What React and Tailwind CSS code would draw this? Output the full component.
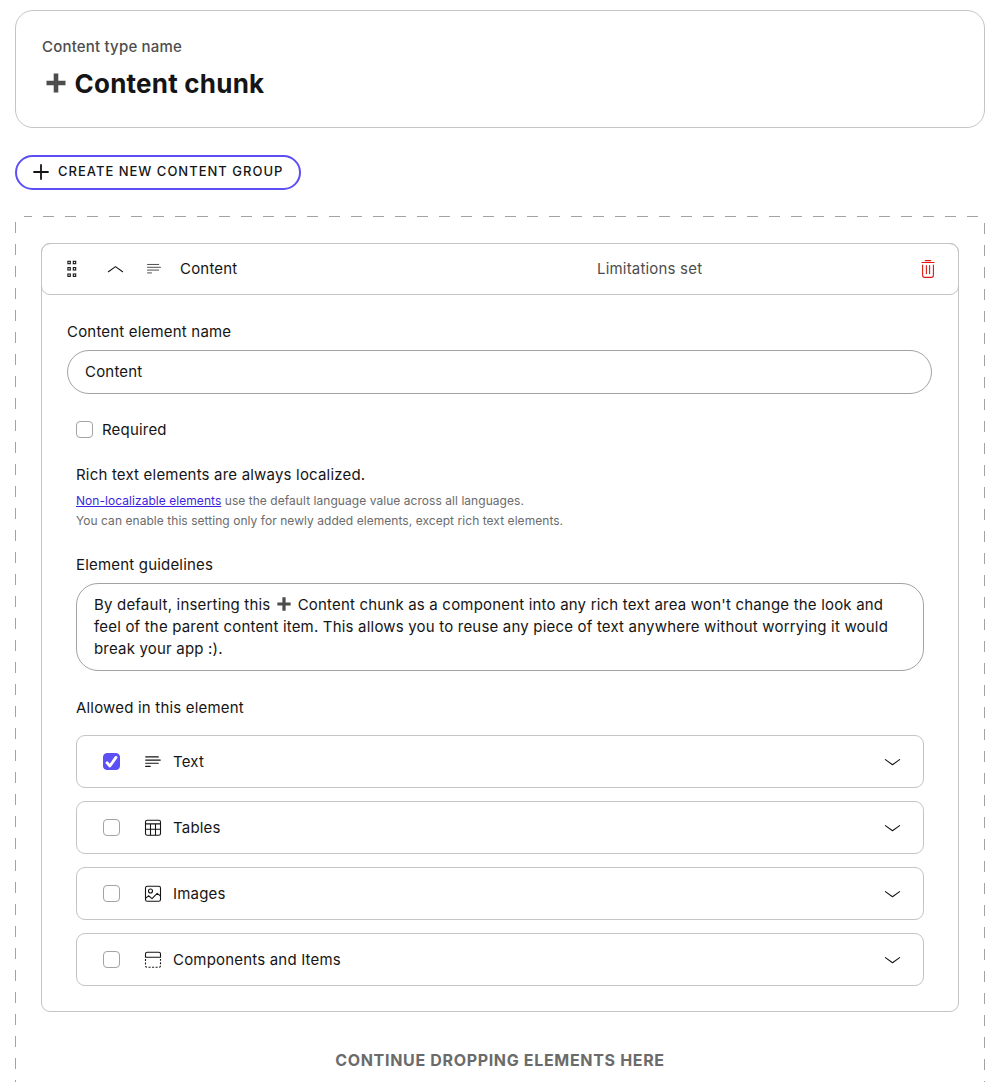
import React, { useState } from 'react';

const TextIcon = ({ className }) => (
  <svg className={className} viewBox="0 0 18 18" fill="none" stroke="currentColor" strokeWidth="1.1" strokeLinecap="round">
    <path d="M1.7 3.9H14.3M1.7 7.1H16.3M1.7 10.2H14.3M1.7 13.4H6.2" />
  </svg>
);

const TableIcon = ({ className }) => (
  <svg className={className} viewBox="0 0 18 18" fill="none" stroke="currentColor" strokeWidth="1.1">
    <rect x="1.5" y="1.2" width="15" height="15" rx="1.8" />
    <path d="M1.5 4.9H16.5M1.5 10.2H16.5M6.5 4.9V16.2M11.5 4.9V16.2" />
  </svg>
);

const ImageIcon = ({ className }) => (
  <svg className={className} viewBox="0 0 18 18" fill="none" stroke="currentColor" strokeWidth="1.1" strokeLinejoin="round">
    <rect x="1.5" y="1.2" width="15" height="15" rx="1.8" />
    <circle cx="6.5" cy="6" r="2" />
    <path d="M1.8 13.2L4.5 10.8L8 13.6L13.2 8.3L16.3 10.9" />
  </svg>
);

const ComponentIcon = ({ className }) => (
  <svg className={className} viewBox="0 0 18 18" fill="none" stroke="currentColor" strokeWidth="1.1">
    <path d="M1.5 6.2V2.9Q1.5 1.2 3.2 1.2H14.8Q16.5 1.2 16.5 2.9V6.2Z" />
    <path d="M1.5 7.9V14.7Q1.5 16.2 3 16.2H15Q16.5 16.2 16.5 14.7V7.9" strokeDasharray="2 1.5" />
  </svg>
);

const Chevron = ({ up }) => (
  <svg className={up ? 'rotate-180' : ''} width="18" height="18" viewBox="0 0 18 18" fill="none" stroke="currentColor" strokeWidth="1.1" strokeLinecap="round" strokeLinejoin="round">
    <path d={up ? 'M2.4 6.3L9.5 11.4L16.6 6.3' : 'M2.4 6.6L9.5 11.7L16.6 6.6'} />
  </svg>
);

const DragIcon = () => (
  <svg width="18" height="18" viewBox="0 0 18 18" fill="none" stroke="currentColor" strokeWidth="1.1">
    {[1.3, 7.6, 14].map((y) => (
      <g key={y}>
        <rect x="4.9" y={y} width="2.4" height="2.4" />
        <rect x="10.3" y={y} width="2.4" height="2.4" />
      </g>
    ))}
  </svg>
);

const TrashIcon = () => (
  <svg width="18" height="18" viewBox="0 0 18 18" fill="none" stroke="currentColor" strokeWidth="1.1" strokeLinecap="round">
    <path d="M6.3 0.6H11.7M2.9 2.5H15.1M3.6 5V15.2Q3.6 17.4 5.8 17.4H12.2Q14.4 17.4 14.4 15.2V5M7.4 5.5V13.6M10.6 5.5V13.6" />
  </svg>
);

const HeavyPlus = ({ className }) => (
  <svg className={className} viewBox="0 0 20 20" fill="none" stroke="#4d4d4d" strokeWidth="4.6">
    <path d="M10 0.5V19.5M0.5 10H19.5" />
  </svg>
);

const Checkbox = ({ checked, onChange }) => (
  <button
    role="checkbox"
    aria-checked={checked}
    onClick={onChange}
    className={`h-[17px] shrink-0 rounded-[4px] border flex items-center justify-center ${checked ? 'bg-[#5b4ff5] border-[#5b4ff5]' : 'bg-white border-[#a3a3a3]'}`}
  >
    {/* keeps the box square when empty */}
    <svg width="15" height="15" viewBox="0 0 16 16" className="shrink-0" fill="none" stroke="white" strokeWidth="3" strokeLinecap="round" strokeLinejoin="round">
      {checked && <path d="M3.2 9.3L6.3 12.8L12.8 3.6" />}
    </svg>
  </button>
);

const OPTIONS = [
  { name: 'Text', icon: TextIcon },
  { name: 'Tables', icon: TableIcon },
  { name: 'Images', icon: ImageIcon },
  { name: 'Components and Items', icon: ComponentIcon },
];

const OptionRow = ({ name, icon: Icon, checked, onChange }) => (
  <div className="h-[53px] flex items-center border border-[#c4c4c4] rounded-[9px] pl-[26px] pr-[22px]">
    <Checkbox checked={checked} onChange={onChange} />
    <Icon className="size-[18px] ml-[24px] mr-[11px]" />
    <span className="flex-1">{name}</span>
    <Chevron />
  </div>
);

// Dashed frame: 11px dashes with 11px gaps on the top, left and right edges
const DropArea = ({ children }) => (
  <div className="flex-1 mt-[26px] flex flex-col">
    <div className="h-px ml-[9px] mr-[6px] bg-[repeating-linear-gradient(90deg,#a3a3a3_0_8px,transparent_8px_19px,#a3a3a3_19px_22px)]" />
    <div className="flex-1 flex">
      <div className="w-px mt-[5px] bg-[repeating-linear-gradient(180deg,#a3a3a3_0_11px,transparent_11px_22px)]" />
      <div className="flex-1 px-[25px] pt-[26px]">{children}</div>
      <div className="w-px mt-[6px] bg-[repeating-linear-gradient(180deg,#a3a3a3_0_11px,transparent_11px_22px)]" />
    </div>
  </div>
);

const ContentElement = () => {
  const [required, setRequired] = useState(false);
  const [allowed, setAllowed] = useState(['Text']);

  const toggle = (name) => {
    setAllowed(prev => prev.includes(name) ? prev.filter(n => n !== name) : [...prev, name]);
  };

  return (
    <div className="h-[769px] border border-[#c4c4c4] rounded-[9px]">
      <div className="-m-px h-[52px] flex items-center border border-[#c4c4c4] rounded-[9px] pl-[21px] pr-[21px]">
        <DragIcon />
        <div className="ml-[26px]"><Chevron up /></div>
        <TextIcon className="size-[16px] ml-[21px] text-[#4d4d4d]" />
        <span className="ml-[18px] w-[417px]">Content</span>
        <span className="flex-1 text-[#4d4d4d]">Limitations set</span>
        <button className="text-[#db1a12]"><TrashIcon /></button>
      </div>

      <div className="px-[25px] pt-[27px]">
        <label className="block">Content element name</label>
        <input
          className="mt-[7px] w-[865px] h-[44px] block rounded-full border border-[#a3a3a3] px-[17px] pb-[2px] outline-none"
          defaultValue="Content"
        />

        <div className="px-[9px]">
          <div className="mt-[25px] h-[22px] flex items-start gap-[9px]">
            <div className="pt-[2px] flex"><Checkbox checked={required} onChange={() => setRequired(!required)} /></div>
            <span>Required</span>
          </div>

          <div className="mt-[23px]">Rich text elements are always localized.</div>
          <div className="mt-[5px] text-[12px] leading-[20px] tracking-[0.05px] text-[#6b6b6b]">
            <p>
              <a className="text-[#3d1fe0] underline" href="#">Non-localizable elements</a> use the default language value across all languages.
            </p>
            <p>You can enable this setting only for newly added elements, except rich text elements.</p>
          </div>

          <div className="mt-[23px]">Element guidelines</div>
          <div className="mt-[7px] w-[848px] h-[88px] rounded-[22px] border border-[#a3a3a3] px-[17px] py-[10px] whitespace-nowrap">
            By default, inserting this <HeavyPlus className="inline-block size-[14px] mx-[2.2px] -mt-[3px]" /> Content chunk as a component into any rich text area won't change the look and
            <br />
            feel of the parent content item. This allows you to reuse any piece of text anywhere without worrying it would
            <br />
            break your app :).
          </div>

          <div className="mt-[26px]">Allowed in this element</div>
          <div className="mt-[16px] w-[848px] flex flex-col gap-[13px]">
            {OPTIONS.map(({ name, icon }) => (
              <OptionRow
                key={name}
                name={name}
                icon={icon}
                checked={allowed.includes(name)}
                onChange={() => toggle(name)}
              />
            ))}
          </div>
        </div>
      </div>
    </div>
  );
};

const App = () => (
  <div className="h-[1082px] w-[999px] overflow-hidden flex flex-col bg-white pl-[15px] pr-[14px] pt-[10px] text-[#151515] text-[15px] leading-[22px] tracking-[0.19px] font-[Inter,sans-serif]">
    <div className="h-[118px] shrink-0 border border-[#c4c4c4] rounded-[18px] px-[26px] pt-[25px]">
      <div className="font-medium text-[#4d4d4d]">Content type name</div>
      <div className="mt-[9px] flex items-center">
        <HeavyPlus className="size-[20px] ml-[3.5px] mr-[9px] -mt-[2px]" />
        <h1 className="text-[26px] leading-[34px] font-bold tracking-[0.23px]">Content chunk</h1>
      </div>
    </div>

    <button className="mt-[27px] h-[35px] w-[286px] shrink-0 flex items-center border-2 border-[#5b4ff5] rounded-full pl-[15px] text-[13px] font-medium tracking-[1px] whitespace-nowrap">
      <svg className="-mt-px" width="18" height="18" viewBox="0 0 18 18" fill="none" stroke="currentColor" strokeWidth="1.8" strokeLinecap="round">
        <path d="M9 2V16M2 9H16" />
      </svg>
      <span className="ml-[8px] -mt-[3px]">CREATE NEW CONTENT GROUP</span>
    </button>

    <DropArea>
      <ContentElement />
      <div className="mt-[37px] text-center text-[#6b6b6b] text-[16px] font-bold tracking-[0.67px]">
        CONTINUE DROPPING ELEMENTS HERE
      </div>
    </DropArea>
  </div>
);

export default App;
